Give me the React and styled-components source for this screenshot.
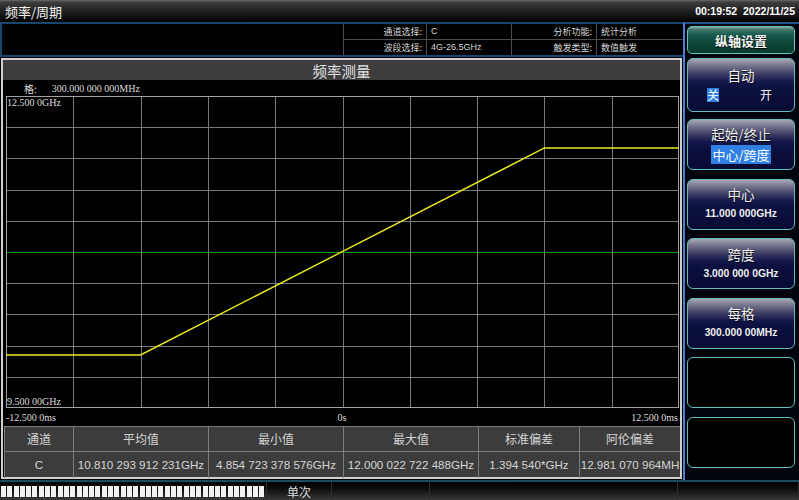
import React from 'react';
import styled, { createGlobalStyle } from 'styled-components';

const SANS = `"Liberation Sans", "Noto Sans CJK SC", sans-serif`;
const CJK = `"Noto Sans CJK SC", "Liberation Sans", sans-serif`;
const SERIF = `"Liberation Serif", "Noto Sans CJK SC", serif`;

const Global = createGlobalStyle`
  html, body { margin: 0; padding: 0; background: #000; overflow: hidden; }
  * { box-sizing: border-box; }
`;

const Screen = styled.div`
  width: 799px;
  height: 500px;
  display: flex;
  flex-direction: column;
  background: #000;
  font-family: ${SANS};
  color: #e8e8e8;
  overflow: hidden;
`;

const TitleBar = styled.header`
  height: 22px;
  flex: none;
  display: flex;
  align-items: center;
  justify-content: space-between;
  padding: 0 4px 0 5px;
  background: linear-gradient(#6a6a6a 0, #3e3e3e 2px, #272727 40%, #0e0e0e 80%, #000 100%);
`;

const AppName = styled.span`
  font-family: ${CJK};
  font-size: 13px;
  color: #f2f2f2;
`;

const Clock = styled.span`
  font-size: 10.5px;
  font-weight: 700;
  color: #fff;
  white-space: pre;
`;

const Body = styled.div`
  flex: 1;
  display: flex;
  min-height: 0;
`;

const MainColumn = styled.div`
  width: 683px;
  flex: none;
  display: flex;
  flex-direction: column;
`;

const InfoPanel = styled.div`
  height: 35px;
  flex: none;
  display: flex;
  justify-content: flex-end;
  border: 2px solid #17466f;
  border-right: none;
  background: #000;
`;

const InfoTable = styled.div`
  width: 340px;
  display: grid;
  grid-template-columns: 83px 85px 85px 1fr;
  grid-template-rows: 1fr 1fr;
`;

const InfoCell = styled.div`
  border-left: 1px solid #4e4e4e;
  border-bottom: ${(p) => (p.$top ? '1px solid #4e4e4e' : 'none')};
  display: flex;
  align-items: center;
  justify-content: ${(p) => (p.$label ? 'flex-end' : 'flex-start')};
  padding: ${(p) => (p.$label ? '0 4px 0 0' : '0 0 0 4px')};
  font-family: ${(p) => (p.$label || p.$cjk ? CJK : SANS)};
  font-size: 9px;
  color: #d6d6d6;
  white-space: nowrap;
`;

const ChartPanel = styled.section`
  flex: 1;
  margin: 1px;
  border: 2px solid #cfcfcf;
  display: flex;
  flex-direction: column;
  background: #000;
  min-height: 0;
`;

const PanelTitle = styled.div`
  height: 20px;
  flex: none;
  background: #3d3d3d;
  display: flex;
  align-items: center;
  justify-content: center;
  font-family: ${CJK};
  font-size: 14.5px;
  color: #e4e4e4;
`;

const ScaleLine = styled.div`
  height: 16px;
  flex: none;
  display: flex;
  align-items: center;
  gap: 15px;
  padding-left: 21px;
  font-family: ${SERIF};
  font-size: 10px;
  color: #dcdcdc;
`;

const ScaleName = styled.span`
  font-family: ${CJK};
  font-size: 10px;
`;

const GridBox = styled.div`
  position: relative;
  width: 673px;
  height: 312px;
  flex: none;
  margin-left: 3px;
`;

const GridSvg = styled.svg`
  display: block;
`;

const YLabel = styled.span`
  position: absolute;
  left: 1px;
  ${(p) => (p.$bottom ? 'bottom: 1px;' : 'top: 1px;')}
  font-family: ${SERIF};
  font-size: 10px;
  line-height: 11px;
  color: #dcdcdc;
`;

const AxisRow = styled.div`
  height: 18px;
  flex: none;
  display: grid;
  grid-template-columns: 1fr auto 1fr;
  align-items: center;
  padding: 0 2px 0 3px;
  font-family: ${SERIF};
  font-size: 10px;
  color: #dcdcdc;
`;

const AxisText = styled.span`
  justify-self: ${(p) => p.$align};
`;

const StatsTable = styled.div`
  height: 51px;
  flex: none;
  margin-left: 1px;
  display: grid;
  grid-template-columns: 69px 135px 135px 135px 101px 101px;
  grid-template-rows: 25px 26px;
  background: #3c3c3c;
  border-top: 1px solid #7c7c7c;
`;

const StatCell = styled.div`
  border-left: 1px solid #7c7c7c;
  border-bottom: ${(p) => (p.$head ? '1px solid #7c7c7c' : 'none')};
  overflow: hidden;
  white-space: nowrap;
  text-align: center;
  line-height: ${(p) => (p.$head ? '24px' : '25px')};
  font-family: ${(p) => (p.$head ? CJK : SANS)};
  font-size: ${(p) => (p.$head ? '12px' : '11.6px')};
  color: #d4d4d4;
`;

const KeyPanel = styled.aside`
  flex: 1;
  border-left: 2px solid #4d7ed0;
  border-top: 2px solid #21548f;
  background: #01040c;
  padding: 2px 4px 0 2px;
  display: flex;
  flex-direction: column;
`;

const MenuTitle = styled.div`
  height: 28px;
  flex: none;
  border: 1.5px solid #62c4c0;
  border-radius: 5px;
  background: linear-gradient(#9aa2a2 0, #447a70 8%, #185a4c 30%, #0c4739 60%, #083a2f 100%);
  display: flex;
  align-items: center;
  justify-content: center;
  font-family: ${CJK};
  font-size: 13px;
  font-weight: 700;
  color: #f4f4f4;
  text-shadow: 0 1px 1px #000;
`;

const SoftKey = styled.div`
  height: ${(p) => p.$h}px;
  margin-top: ${(p) => p.$mt}px;
  flex: none;
  border: 1.5px solid #5fbfbc;
  border-radius: 6px;
  background: ${(p) =>
    p.$empty
      ? '#000'
      : 'linear-gradient(180deg, #a6a6b6 0%, #78788f 12%, #3a3a62 30%, #13174b 44%, #0b0f3c 60%, #080b34 100%)'};
  display: flex;
  flex-direction: column;
  justify-content: space-evenly;
  padding: 2px 0 3px;
`;

const KeyTitle = styled.div`
  text-align: center;
  font-family: ${CJK};
  font-size: 13.5px;
  line-height: 16px;
  color: #f2f2f2;
  text-shadow: 0 1px 1px #000;
`;

const KeyValue = styled.div`
  text-align: center;
  font-family: ${SANS};
  font-size: 10.3px;
  font-weight: 700;
  line-height: 15px;
  color: #eeeeee;
`;

const ToggleRow = styled.div`
  display: flex;
  justify-content: space-between;
  padding: 0 22px 0 19px;
  font-family: ${CJK};
  font-size: 12px;
  line-height: 14px;
  color: #f2f2f2;
`;

const Selected = styled.span`
  background: #2f80e2;
  color: #fff;
  padding: 0 ${(p) => p.$pad || 0}px;
  font-family: ${CJK};
`;

const SelectRow = styled.div`
  text-align: center;
  font-family: ${CJK};
  font-size: 13px;
  line-height: 15px;
`;

const StatusBar = styled.footer`
  height: 20px;
  flex: none;
  border-top: 2px solid #1b4b60;
  background: linear-gradient(#000 0%, #0c0c0c 35%, #2a2a2a 80%, #3a3a3a 100%);
  display: flex;
`;

const StatusSeg = styled.div`
  width: ${(p) => p.$w}px;
  flex: ${(p) => (p.$w ? 'none' : '1')};
  border-right: 1px solid #2e2e2e;
  display: flex;
  align-items: center;
  justify-content: center;
  font-family: ${CJK};
  font-size: 12px;
  color: #dcdcdc;
`;

const Blocks = styled.div`
  width: 267px;
  flex: none;
  display: flex;
  gap: 1.3px;
  padding: 4px 0 2px 1px;
  border-right: 1px solid #2e2e2e;
`;

const Block = styled.span`
  width: 5px;
  height: 11px;
  background: #f2f2f2;
`;

const COLS = 10;
const ROWS = 10;
const GW = 673;
const GH = 312;

function Chart() {
  const vLines = [];
  for (let i = 1; i < COLS; i++) {
    const x = Math.round((i * GW) / COLS) + 0.5;
    vLines.push(<line key={'v' + i} x1={x} y1={0} x2={x} y2={GH} stroke="#7a7a7a" strokeWidth="1" />);
  }
  const hLines = [];
  for (let j = 1; j < ROWS; j++) {
    if (j === 5) continue;
    const y = Math.round((j * GH) / ROWS) + 0.5;
    hLines.push(<line key={'h' + j} x1={0} y1={y} x2={GW} y2={y} stroke="#7a7a7a" strokeWidth="1" />);
  }
  const yOf = (ghz) => GH - ((ghz - 9.5) / 3) * GH;
  const x2 = (2 * GW) / COLS;
  const x8 = (8 * GW) / COLS;
  const pts = `0,${yOf(10.01)} ${x2},${yOf(10.01)} ${x8},${yOf(12.0)} ${GW},${yOf(12.0)}`;
  return (
    <GridSvg width={GW} height={GH} viewBox={`0 0 ${GW} ${GH}`}>
      <g shapeRendering="crispEdges">
        {vLines}
        {hLines}
        <line x1={0} y1={156.5} x2={GW} y2={156.5} stroke="#0a9a0a" strokeWidth="1.4" />
        <rect x={0.5} y={0.5} width={GW - 1} height={GH - 1} fill="none" stroke="#a0a0a0" strokeWidth="1" />
      </g>
      <polyline points={pts} fill="none" stroke="#eaea22" strokeWidth="1.4" />
    </GridSvg>
  );
}

const stats = {
  head: ['通道', '平均值', '最小值', '最大值', '标准偏差', '阿伦偏差'],
  row: ['C', '10.810 293 912 231GHz', '4.854 723 378 576GHz', '12.000 022 722 488GHz', '1.394 540*GHz', '12.981 070 964MH'],
};

export default function App() {
  return (
    <>
      <Global />
      <Screen>
        <TitleBar>
          <AppName>频率/周期</AppName>
          <Clock>{'00:19:52  2022/11/25'}</Clock>
        </TitleBar>
        <Body>
          <MainColumn>
            <InfoPanel>
              <InfoTable>
                <InfoCell $label $top>通道选择:</InfoCell>
                <InfoCell $top>C</InfoCell>
                <InfoCell $label $top>分析功能:</InfoCell>
                <InfoCell $top $cjk>统计分析</InfoCell>
                <InfoCell $label>波段选择:</InfoCell>
                <InfoCell>4G-26.5GHz</InfoCell>
                <InfoCell $label>触发类型:</InfoCell>
                <InfoCell $cjk>数值触发</InfoCell>
              </InfoTable>
            </InfoPanel>
            <ChartPanel>
              <PanelTitle>频率测量</PanelTitle>
              <ScaleLine>
                <ScaleName>格:</ScaleName>
                <span>300.000 000 000MHz</span>
              </ScaleLine>
              <GridBox>
                <Chart />
                <YLabel>12.500 0GHz</YLabel>
                <YLabel $bottom>9.500 00GHz</YLabel>
              </GridBox>
              <AxisRow>
                <AxisText $align="start">-12.500 0ms</AxisText>
                <AxisText $align="center">0s</AxisText>
                <AxisText $align="end">12.500 0ms</AxisText>
              </AxisRow>
              <StatsTable>
                {stats.head.map((h) => (
                  <StatCell $head key={h}>{h}</StatCell>
                ))}
                {stats.row.map((v, i) => (
                  <StatCell key={i}>{v}</StatCell>
                ))}
              </StatsTable>
            </ChartPanel>
          </MainColumn>
          <KeyPanel>
            <MenuTitle>纵轴设置</MenuTitle>
            <SoftKey $h={54} $mt={4}>
              <KeyTitle>自动</KeyTitle>
              <ToggleRow>
                <Selected>关</Selected>
                <span>开</span>
              </ToggleRow>
            </SoftKey>
            <SoftKey $h={51} $mt={7}>
              <KeyTitle>起始/终止</KeyTitle>
              <SelectRow>
                <Selected $pad={1}>中心/跨度</Selected>
              </SelectRow>
            </SoftKey>
            <SoftKey $h={51} $mt={8.6}>
              <KeyTitle>中心</KeyTitle>
              <KeyValue>11.000 000GHz</KeyValue>
            </SoftKey>
            <SoftKey $h={51} $mt={8.6}>
              <KeyTitle>跨度</KeyTitle>
              <KeyValue>3.000 000 0GHz</KeyValue>
            </SoftKey>
            <SoftKey $h={51} $mt={8.6}>
              <KeyTitle>每格</KeyTitle>
              <KeyValue>300.000 00MHz</KeyValue>
            </SoftKey>
            <SoftKey $h={51} $mt={8.6} $empty />
            <SoftKey $h={51} $mt={8.6} $empty />
          </KeyPanel>
        </Body>
        <StatusBar>
          <Blocks>
            {Array.from({ length: 42 }, (_, i) => (
              <Block key={i} />
            ))}
          </Blocks>
          <StatusSeg $w={65}>单次</StatusSeg>
          <StatusSeg $w={98} />
          <StatusSeg $w={248} />
          <StatusSeg />
        </StatusBar>
      </Screen>
    </>
  );
}
